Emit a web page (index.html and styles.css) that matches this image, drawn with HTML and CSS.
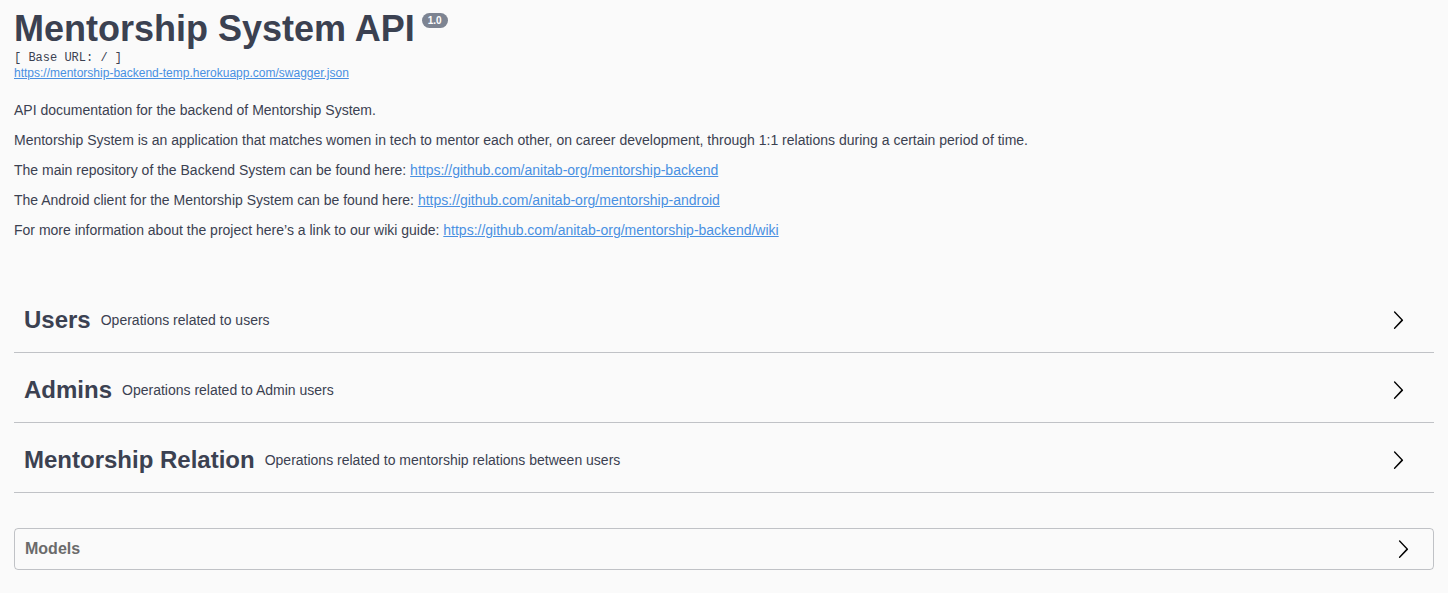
FILE: index.html
```html
<html>
<head>
  <meta charset="UTF-8">
  <title>Mentorship System API</title>
  <link rel="stylesheet" href="styles.css">
</head>
<body>

<div class="wrapper">

  <div class="info">
    <h2 class="title">Mentorship System API<span class="version">1.0</span></h2>
    <pre class="base-url">[ Base URL: / ]</pre>
    <a class="spec-link" href="#">https://mentorship-backend-temp.herokuapp.com/swagger.json</a>
    <div class="description">
      <p>API documentation for the backend of Mentorship System.</p>
      <p>Mentorship System is an application that matches women in tech to mentor each other, on career development, through 1:1 relations during a certain period of time.</p>
      <p>The main repository of the Backend System can be found here: <a href="#">https://github.com/anitab-org/mentorship-backend</a></p>
      <p>The Android client for the Mentorship System can be found here: <a href="#">https://github.com/anitab-org/mentorship-android</a></p>
      <p>For more information about the project here&rsquo;s a link to our wiki guide: <a href="#">https://github.com/anitab-org/mentorship-backend/wiki</a></p>
    </div>
  </div>

  <div class="tags">
    <div class="tag">
      <span class="tag-name">Users</span>
      <small>Operations related to users</small>
      <button class="expand"><svg width="20" height="20" viewBox="0 0 20 20"><path d="M13.25 10L6.109 2.58a.697.697 0 0 1 0-.979.68.68 0 0 1 .969 0l7.83 8.08a.697.697 0 0 1 0 .979l-7.830 8.08a.68.68 0 0 1-.969 0 .697.697 0 0 1 0-.979L13.25 10z"/></svg></button>
    </div>
    <div class="tag">
      <span class="tag-name">Admins</span>
      <small>Operations related to Admin users</small>
      <button class="expand"><svg width="20" height="20" viewBox="0 0 20 20"><path d="M13.25 10L6.109 2.58a.697.697 0 0 1 0-.979.68.68 0 0 1 .969 0l7.83 8.08a.697.697 0 0 1 0 .979l-7.830 8.08a.68.68 0 0 1-.969 0 .697.697 0 0 1 0-.979L13.25 10z"/></svg></button>
    </div>
    <div class="tag">
      <span class="tag-name">Mentorship Relation</span>
      <small>Operations related to mentorship relations between users</small>
      <button class="expand"><svg width="20" height="20" viewBox="0 0 20 20"><path d="M13.25 10L6.109 2.58a.697.697 0 0 1 0-.979.68.68 0 0 1 .969 0l7.83 8.08a.697.697 0 0 1 0 .979l-7.830 8.08a.68.68 0 0 1-.969 0 .697.697 0 0 1 0-.979L13.25 10z"/></svg></button>
    </div>
  </div>

  <section class="models">
    <h4>
      <span>Models</span>
      <svg width="20" height="20" viewBox="0 0 20 20"><path d="M13.25 10L6.109 2.58a.697.697 0 0 1 0-.979.68.68 0 0 1 .969 0l7.83 8.08a.697.697 0 0 1 0 .979l-7.830 8.08a.68.68 0 0 1-.969 0 .697.697 0 0 1 0-.979L13.25 10z"/></svg>
    </h4>
  </section>

</div>

</body>
</html>
```

FILE: styles.css
```css
body { margin: 0; background: #fafafa; color: #3b4151; font-family: "Liberation Sans", Arial, sans-serif; }
a { color: #4990e2; }
.wrapper { padding: 0 14px; }

/* info block */
.title { margin: 0; padding-top: 9px; font-size: 36px; line-height: 40px; font-weight: 700; }
.version {
  display: inline-block;
  vertical-align: top;
  margin: 4px 0 0 7px;
  padding: 2px 6px;
  font-size: 10px;
  line-height: 11px;
  font-weight: 700;
  color: #fff;
  background: #7d8492;
  border-radius: 57px;
}
.base-url { margin: 2px 0 0; font: 12px/14px "Liberation Mono", "Courier New", monospace; }
.spec-link { display: block; margin-top: 1px; font-size: 12px; line-height: 14px; }

.description { display: flex; flex-direction: column; gap: 12px; margin-top: 21px; }
.description p { margin: 0; font-size: 14px; line-height: 18px; }

/* tag sections */
.tags { margin-top: 49px; }
.tag {
  display: flex;
  align-items: center;
  height: 64px;
  padding: 0 20px 0 10px;
  margin-bottom: 5px;
  border-bottom: 1px solid rgba(59,65,81,0.3);
}
.tag-name { font-size: 24px; font-weight: 700; }
.tag small { flex: 1; padding: 0 10px; font-size: 14px; }
.expand { display: flex; padding: 0 6px; border: none; background: none; }

/* models */
.models { margin-top: 35px; border: 1px solid rgba(59,65,81,0.3); border-radius: 4px; }
.models h4 {
  display: flex;
  align-items: center;
  justify-content: space-between;
  margin: 0;
  padding: 10px 20px 10px 10px;
  font-size: 16px;
  color: #6b6b6b;
}
```
